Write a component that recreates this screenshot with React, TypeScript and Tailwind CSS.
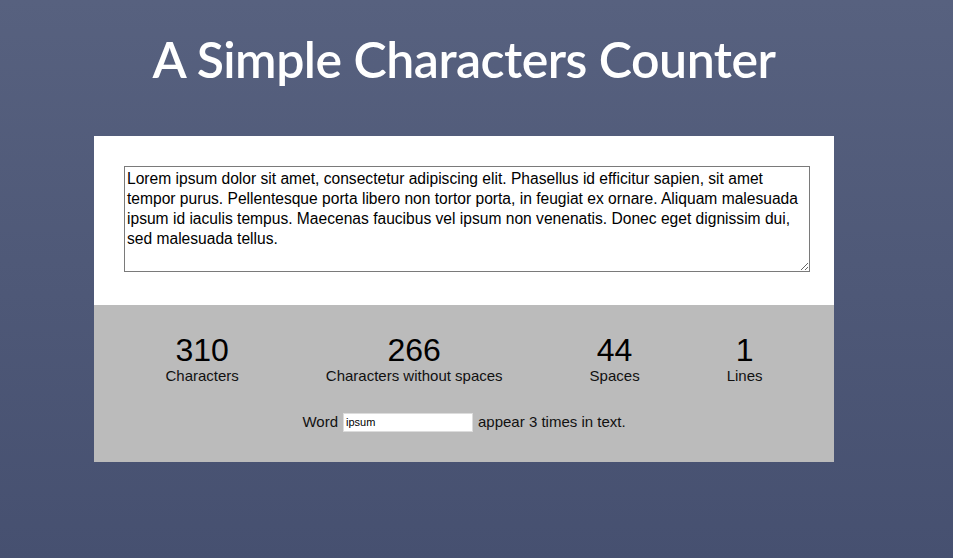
import { useState } from 'react';

const SAMPLE =
  'Lorem ipsum dolor sit amet, consectetur adipiscing elit. Phasellus id efficitur sapien, sit amet tempor purus. Pellentesque porta libero non tortor porta, in feugiat ex ornare. Aliquam malesuada ipsum id iaculis tempus. Maecenas faucibus vel ipsum non venenatis. Donec eget dignissim dui, sed malesuada tellus.';

type StatProps = { value: number; label: string };

function Stat({ value, label }: StatProps) {
  return (
    <div className="flex flex-col items-center">
      <span className="text-[32px] leading-[34px] text-black">{value}</span>
      <span className="text-[15px] leading-[18px] text-[#111]">{label}</span>
    </div>
  );
}

export default function App() {
  const [text, setText] = useState(SAMPLE);
  const [word, setWord] = useState('ipsum');

  const chars = text.length;
  const spaces = (text.match(/ /g) || []).length;
  const lines = text.split('\n').length;
  const occurrences = word
    ? text.split(/[^A-Za-z0-9]+/).filter((w) => w.toLowerCase() === word.toLowerCase()).length
    : 0;

  return (
    <div
      className="min-h-[558px] w-full bg-gradient-to-b from-[#57617f] to-[#465070] pb-24"
      style={{ fontFamily: '"Liberation Sans", "Noto Sans", sans-serif' }}
    >
      <div className="w-[928px]">
        <h1
          className="pt-[24px] text-center text-[50px] font-semibold leading-[70px] tracking-[-0.5px] text-white"
          style={{ fontFamily: 'Lato, "Noto Sans", sans-serif' }}
        >
          A Simple Characters Counter
        </h1>

        <div className="mx-auto mt-[42px] w-[740px]">
          {/* Input area */}
          <div className="bg-white px-[30px] pb-[33px] pt-[30px]">
            <textarea
              value={text}
              onChange={(e) => setText(e.target.value)}
              spellCheck={false}
              className="block h-[106px] w-[686px] resize-y border border-[#7a7a7a] px-[2px] py-[2px] text-[15.6px] leading-[20px] text-black outline-none"
            />
          </div>

          {/* Stats */}
          <div className="bg-[#bbbbbb] pb-[28px] pt-[28px]">
            <div className="flex justify-center gap-[87px]">
              <Stat value={chars} label="Characters" />
              <Stat value={chars - spaces} label="Characters without spaces" />
              <Stat value={spaces} label="Spaces" />
              <Stat value={lines} label="Lines" />
            </div>
            <div className="mt-[26px] flex items-center justify-center gap-[5px] text-[15px] text-[#111]">
              <span>Word</span>
              <input
                value={word}
                onChange={(e) => setWord(e.target.value)}
                className="h-[19px] w-[130px] border border-[#dcdcdc] bg-white px-[2px] text-[11px] text-black outline-none"
                style={{ fontFamily: '"Liberation Sans", Arial, sans-serif' }}
              />
              <span>appear {occurrences} times in text.</span>
            </div>
          </div>
        </div>
      </div>
    </div>
  );
}
